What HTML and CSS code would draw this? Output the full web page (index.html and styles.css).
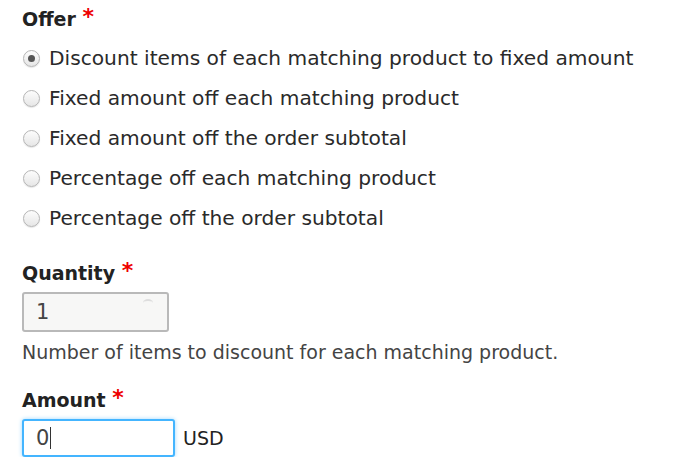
FILE: index.html
```html
<!DOCTYPE html>
<html>
<head>
<meta charset="utf-8">
<link rel="stylesheet" href="styles.css">
</head>
<body>
<form class="form">
  <div class="field field-offer">
    <div class="label">Offer <span class="req">*</span></div>
    <div class="radios">
      <label class="radio"><span class="dot checked"></span>Discount items of each matching product to fixed amount</label>
      <label class="radio"><span class="dot"></span>Fixed amount off each matching product</label>
      <label class="radio"><span class="dot"></span>Fixed amount off the order subtotal</label>
      <label class="radio"><span class="dot"></span>Percentage off each matching product</label>
      <label class="radio"><span class="dot"></span>Percentage off the order subtotal</label>
    </div>
  </div>
  <div class="field field-qty">
    <div class="label">Quantity <span class="req">*</span></div>
    <div class="input qty"><span class="val">1</span><span class="spin"></span></div>
    <div class="desc">Number of items to discount for each matching product.</div>
  </div>
  <div class="field field-amount">
    <div class="label">Amount <span class="req">*</span></div>
    <div class="row">
      <div class="input amount"><span class="val">0</span><span class="caret"></span></div>
      <span class="unit">USD</span>
    </div>
  </div>
</form>
</body>
</html>
```
FILE: styles.css
```css
html, body {
  margin: 0;
  padding: 0;
  background: #fff;
}
body {
  font-family: "DejaVu Sans", "Liberation Sans", sans-serif;
  font-size: 18px;
  color: #333;
}
.form {
  padding: 7px 0 0 22px;
}
.label {
  font-weight: bold;
  font-size: 19px;
  color: #222;
  height: 24px;
  line-height: 24px;
}
.req {
  color: #e00;
  font-weight: bold;
  font-size: 22px;
  vertical-align: top;
  line-height: 20px;
}
.radios {
  display: flex;
  flex-direction: column;
  padding-top: 7px;
}
.radio {
  display: flex;
  align-items: center;
  height: 40px;
  font-size: 20.2px;
  color: #2a2a2a;
}
.dot {
  width: 15px;
  height: 15px;
  border-radius: 50%;
  border: 1px solid #b5b5b5;
  background: linear-gradient(#fdfdfd, #e6e6e6);
  box-shadow: 0 1px 1px rgba(0,0,0,0.1);
  margin: 0 9px 0 1px;
  position: relative;
  flex: none;
}
.dot.checked::after {
  content: "";
  position: absolute;
  left: 4px;
  top: 4px;
  width: 7px;
  height: 7px;
  border-radius: 50%;
  background: #555;
}
.field-qty {
  margin-top: 23px;
}
.input {
  box-sizing: border-box;
  border-radius: 3px;
  display: flex;
  align-items: center;
  position: relative;
  color: #444;
  font-size: 21px;
}
.qty {
  width: 147px;
  height: 40px;
  margin-top: 7px;
  border: 2px solid #b9b9b9;
  background: #f7f7f6;
  padding-left: 12px;
}
.spin {
  position: absolute;
  right: 14px;
  top: 5px;
  width: 10px;
  height: 6px;
  border-top: 2px solid #ddd;
  border-radius: 50% 50% 0 0;
}
.desc {
  margin-top: 8px;
  font-size: 19px;
  color: #444;
  height: 24px;
  line-height: 24px;
}
.field-amount {
  margin-top: 24px;
}
.row {
  display: flex;
  align-items: center;
  margin-top: 7px;
}
.amount {
  width: 153px;
  height: 38px;
  border: 2px solid #44b5ff;
  background: #fff;
  box-shadow: 0 0 4px #9fd8ff;
  padding-left: 12px;
}
.caret {
  width: 1px;
  height: 22px;
  background: #333;
  margin-left: 1px;
}
.unit {
  margin-left: 8px;
  font-size: 19px;
  color: #222;
}
```
